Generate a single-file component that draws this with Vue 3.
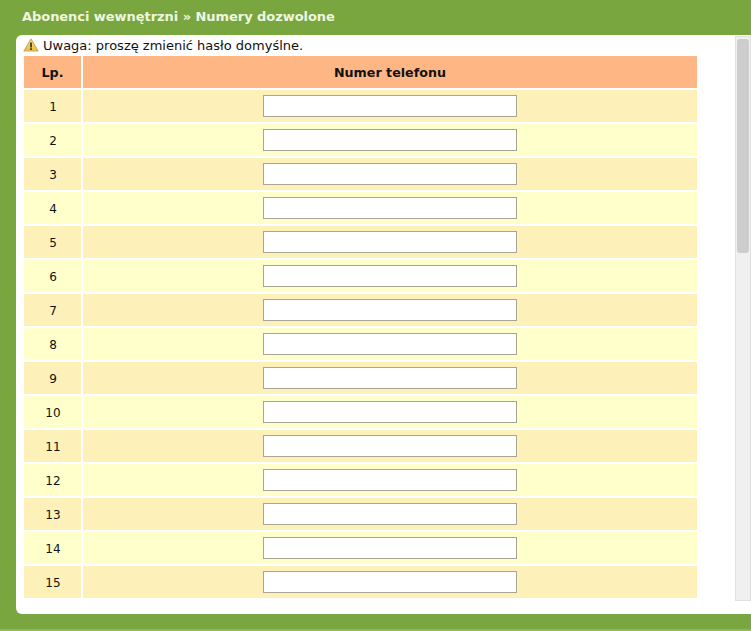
<script setup>
const rows = Array.from({ length: 15 }, (_, i) => i + 1)
</script>

<template>
  <div class="page">
    <h1 class="title">Abonenci wewnętrzni » Numery dozwolone</h1>
    <div class="panel">
      <div class="content">
        <div class="warning">
          <svg class="warn-icon" width="16" height="14" viewBox="0 0 16 14">
            <defs>
              <linearGradient id="w" x1="0" y1="0" x2="0" y2="1">
                <stop offset="0" stop-color="#fbeb8f" />
                <stop offset="1" stop-color="#eebc2a" />
              </linearGradient>
            </defs>
            <path d="M8 1 15 13H1Z" fill="url(#w)" stroke="#c2ae72" stroke-width="1.2" stroke-linejoin="round" />
            <rect x="7.1" y="4.5" width="1.8" height="5" fill="#4a3b0c" />
            <rect x="7.1" y="10.2" width="1.8" height="1.8" fill="#4a3b0c" />
          </svg>
          <span>Uwaga: proszę zmienić hasło domyślne.</span>
        </div>
        <table class="table">
          <thead>
            <tr>
              <th class="c1">Lp.</th>
              <th>Numer telefonu</th>
            </tr>
          </thead>
          <tbody>
            <tr v-for="n in rows" :key="n" :class="n % 2 ? 'odd' : 'even'">
              <td class="c1 num">{{ n }}</td>
              <td class="c2"><input class="field" type="text" /></td>
            </tr>
          </tbody>
        </table>
      </div>
      <div class="scrollbar"><div class="thumb"></div></div>
    </div>
    <div class="foot"></div>
  </div>
</template>

<style>
html, body { margin: 0; padding: 0; background: #7aa63f; overflow: hidden; }
</style>

<style scoped>
.page {
  width: 751px;
  height: 631px;
  background: #7aa63f;
  font-family: "DejaVu Sans", Verdana, sans-serif;
  display: flex;
  flex-direction: column;
  overflow: hidden;
}
.title {
  margin: 0;
  height: 35px;
  box-sizing: border-box;
  padding: 9px 0 0 22px;
  font-size: 13px;
  line-height: 16px;
  font-weight: bold;
  letter-spacing: -0.05px;
  color: #eef6e0;
}
.panel {
  margin-left: 16px;
  height: 579px;
  background: #fff;
  border-radius: 6px 0 0 6px;
  display: flex;
  justify-content: space-between;
}
.content { padding: 0 0 0 6px; width: 679px; }
.warning {
  height: 19px;
  display: flex;
  align-items: center;
  gap: 4px;
  padding: 2px 0 0 1px;
  box-sizing: border-box;
  font-size: 13px;
  color: #111;
}
.warn-icon { flex: none; margin-top: -2px; }
.table {
  border-collapse: separate;
  border-spacing: 2px;
  width: 677px;
  table-layout: fixed;
  font-size: 12px;
  color: #111;
}
.table th {
  height: 32px;
  padding: 1px 0 0;
  box-sizing: border-box;
  background: #ffb685;
  font-size: 12.7px;
  font-weight: bold;
  text-align: center;
}
.table .c1 { width: 57px; }
.table td {
  height: 32px;
  padding: 0;
  text-align: center;
}
.table td.num { padding: 1px 0 0 1px; box-sizing: border-box; }
.odd td { background: #fdf1b9; }
.even td { background: #ffffcc; }
.field {
  display: block;
  margin: 0 auto;
  width: 254px;
  height: 22px;
  box-sizing: border-box;
  border: 1px solid #a9a595;
  background: #fff;
  padding: 0 2px;
}
.scrollbar {
  width: 16px;
  height: 565px;
  margin-top: 1px;
  box-sizing: border-box;
  background: #f0f0f0;
  border: 1px solid #e0e0e0;
  padding: 2px 1px 0;
}
.thumb {
  height: 214px;
  background: #cdcdcd;
  border-radius: 3px;
}
.foot {
  margin-top: 15px;
  height: 2px;
  background: #8fb65a;
}
</style>
